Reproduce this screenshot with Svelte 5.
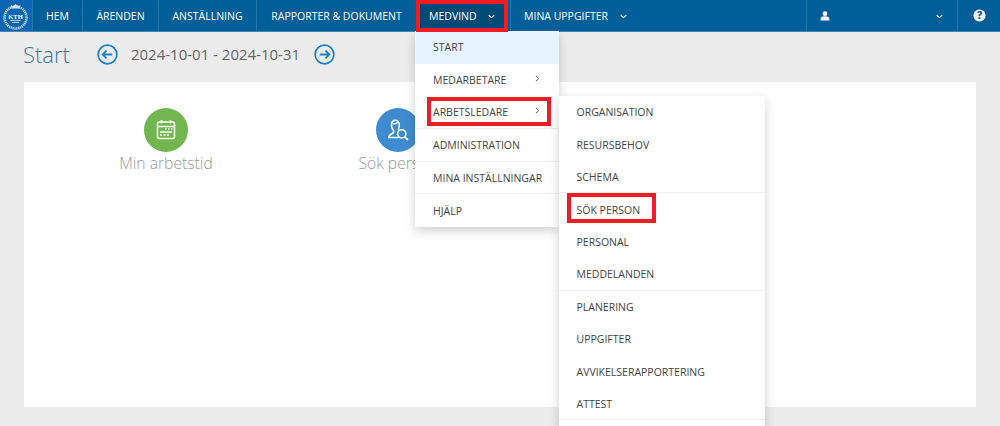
<script>
  const nav = [
    { label: 'HEM', w: 50 },
    { label: 'ÄRENDEN', w: 76 },
    { label: 'ANSTÄLLNING', w: 98 },
    { label: 'RAPPORTER & DOKUMENT', w: 160 }
  ];

  const menu = [
    { label: 'START', active: true },
    { label: 'MEDARBETARE', arrow: true },
    { label: 'ARBETSLEDARE', arrow: true, marked: true, line: true },
    { label: 'ADMINISTRATION', line: true },
    { label: 'MINA INSTÄLLNINGAR', line: true },
    { label: 'HJÄLP' }
  ];

  const submenu = [
    { label: 'ORGANISATION' },
    { label: 'RESURSBEHOV' },
    { label: 'SCHEMA', line: true },
    { label: 'SÖK PERSON', marked: true },
    { label: 'PERSONAL' },
    { label: 'MEDDELANDEN', line: true },
    { label: 'PLANERING' },
    { label: 'UPPGIFTER' },
    { label: 'AVVIKELSERAPPORTERING' },
    { label: 'ATTEST', line: true },
    { label: '' }
  ];
</script>

{#snippet chevron()}
  <svg class="chevron" viewBox="0 0 10 6" width="7" height="5"><path d="M1 1l4 3.600L9 1" fill="none" stroke="currentColor" stroke-width="1.500" /></svg>
{/snippet}

<div class="page">
  <header class="navbar">
    <div class="logo">
      <svg viewBox="0 0 32 32" width="32" height="32">
        <circle cx="15.500" cy="17.500" r="11" fill="none" stroke="#c3d5e8" stroke-width="2.600" stroke-dasharray="1.200 0.700" />
        <path d="M11.500 8.500l-.8-3.500 2.300 1.300 2.500-2.300 2.500 2.300 2.300-1.300-.8 3.500z" fill="#d5e2f0" />
        <text x="15.500" y="18.500" text-anchor="middle" class="kth">KTH</text>
        <rect x="10.500" y="20" width="10" height="1" fill="#b9cfe6" />
        <rect x="12" y="22" width="7" height="1" fill="#b9cfe6" />
      </svg>
    </div>
    {#each nav as item}
      <div class="nav-item" style="width: {item.w}px">{item.label}</div>
    {/each}
    <div class="nav-item current">
      <span>MEDVIND</span>
      {@render chevron()}
    </div>
    <div class="nav-item tasks">
      <span>MINA UPPGIFTER</span>
      {@render chevron()}
    </div>
    <div class="nav-item user">
      <svg viewBox="0 0 12 12" width="10" height="10"><circle cx="6" cy="3.200" r="2.800" fill="#fff" /><path d="M0.800 11.500V9c0-1.800 1.800-2.800 5.200-2.800s5.200 1 5.200 2.800v2.500z" fill="#fff" /></svg>
      {@render chevron()}
    </div>
    <div class="nav-item help">
      <svg viewBox="0 0 14 14" width="13" height="13">
        <circle cx="7" cy="7" r="6.500" fill="#fff" />
        <text x="7" y="10.600" text-anchor="middle" class="qmark">?</text>
      </svg>
    </div>
  </header>

  <div class="title-row">
    <h1>Start</h1>
    <svg viewBox="0 0 22 22" width="21" height="21"><circle cx="11" cy="11" r="9.800" fill="none" stroke="#1a82c9" stroke-width="1.800" /><path d="M16 11H6.500M10 7l-4 4 4 4" fill="none" stroke="#1a82c9" stroke-width="1.900" /></svg>
    <span class="dates">2024-10-01 - 2024-10-31</span>
    <svg viewBox="0 0 22 22" width="21" height="21"><circle cx="11" cy="11" r="9.800" fill="none" stroke="#1a82c9" stroke-width="1.800" /><path d="M6 11h9.500M12 7l4 4-4 4" fill="none" stroke="#1a82c9" stroke-width="1.900" /></svg>
  </div>

  <main class="card">
    <div class="tile">
      <div class="circle green">
        <svg viewBox="0 0 24 24" width="24" height="24" fill="none" stroke="#fff">
          <rect x="3.500" y="4" width="17" height="16.500" rx="1.500" stroke-width="1.500" />
          <path d="M7.500 2v3.500M16.500 2v3.500M3.500 8.500h17" stroke-width="1.500" />
          <path d="M11 11h1.500M14 11h1.500M17 11h1.500M6 14h12M6 17h2M9.500 17h2M13 17h2" stroke-width="1.300" />
        </svg>
      </div>
      <span>Min arbetstid</span>
    </div>
    <div class="tile">
      <div class="circle blue">
        <svg viewBox="0 0 24 24" width="26" height="26" fill="none" stroke="#fff" stroke-width="1.400">
          <path d="M12 11.500c1-1 1.200-2.500 1.200-4C13.200 4.500 11.500 3 9.500 3S6 4.700 6 7.500c0 2 .8 4 2 5 .3 1.500-.5 2.500-2 3.200-1.500.7-2.500 1.800-2.500 3.300h9" />
          <path d="M7 6c2 .5 4 0 5-1.500" />
          <circle cx="15.500" cy="15.500" r="3.800" />
          <path d="M18.300 18.300l3 3" stroke-width="1.800" />
        </svg>
      </div>
      <span>Sök person</span>
    </div>
  </main>

  <nav class="dropdown">
    {#each menu as item}
      <div class="row" class:active={item.active} class:line={item.line}>
        <span>{item.label}</span>
        {#if item.arrow}
          <svg class="arrow" viewBox="0 0 6 8" width="5" height="7"><path d="M1 .8L4.600 4 1 7.200" fill="none" stroke="#444" stroke-width="1" /></svg>
        {/if}
        {#if item.marked}<i class="mark wide"></i>{/if}
      </div>
    {/each}
  </nav>

  <nav class="dropdown sub">
    {#each submenu as item}
      <div class="row" class:line={item.line}>
        <span>{item.label}</span>
        {#if item.marked}<i class="mark person"></i>{/if}
      </div>
    {/each}
  </nav>
</div>

<style>
  :global(body) {
    margin: 0;
    background: #ececec;
  }

  .page {
    position: relative;
    width: 1000px;
    height: 426px;
    overflow: hidden;
    background: #ececec;
    font-family: "Open Sans", sans-serif;
  }

  .navbar {
    display: flex;
    height: 31px;
    background: #005f98;
    border-bottom: 1px solid #3d86b5;
    color: #fff;
    font-size: 10.500px;
    font-weight: 500;
  }

  .logo {
    width: 32px;
    flex: none;
    background: #0a66b4;
  }

  .kth {
    font-family: "Liberation Serif", serif;
    font-size: 6.500px;
    font-weight: 700;
    fill: #fff;
  }

  .qmark {
    font-family: "Open Sans", sans-serif;
    font-size: 11px;
    font-weight: 800;
    fill: #005f98;
  }

  .nav-item {
    display: flex;
    align-items: center;
    justify-content: center;
    box-sizing: border-box;
    flex: none;
    border-left: 1px solid #2277aa;
    white-space: nowrap;
  }

  .nav-item.current {
    width: 92px;
    height: 32px;
    margin-bottom: -1px;
    justify-content: flex-start;
    gap: 11px;
    padding-left: 9px;
    background: #004a78;
    border: 4px solid #ee1c25;
    z-index: 3;
  }

  .nav-item.tasks {
    width: 296px;
    margin-left: 2px;
    justify-content: flex-start;
    gap: 12px;
    padding-left: 13px;
  }

  .nav-item.user {
    width: 151px;
    justify-content: space-between;
    padding: 0 14px 0 13px;
  }

  .nav-item.help {
    width: 43px;
  }

  .chevron {
    flex: none;
    margin-top: 1px;
  }

  .title-row {
    display: flex;
    align-items: center;
    height: 44px;
    margin-bottom: 6px;
    padding-left: 23px;
  }

  h1 {
    margin: 0 27px 0 0;
    font-size: 22px;
    font-weight: 300;
    color: #3a78a8;
  }

  .dates {
    margin: 0 14px 0 13px;
    font-size: 15px;
    color: #666;
  }

  .card {
    display: flex;
    box-sizing: border-box;
    width: 952px;
    height: 325px;
    margin-left: 24px;
    padding: 26px 26px;
    background: #fff;
  }

  .tile {
    display: flex;
    flex-direction: column;
    align-items: center;
    width: 232px;
    font-size: 15.700px;
    font-weight: 300;
    color: #999;
    line-height: 22px;
  }

  .circle {
    display: flex;
    align-items: center;
    justify-content: center;
    width: 44px;
    height: 44px;
    border-radius: 50%;
  }

  .green {
    background: #72b650;
  }

  .blue {
    background: #3f8bd0;
  }

  .dropdown {
    position: absolute;
    left: 415px;
    top: 31px;
    width: 144px;
    background: #fff;
    box-shadow: 0 4px 10px rgba(0, 0, 0, 0.18);
    font-size: 10.500px;
    color: #444;
    z-index: 2;
  }

  .dropdown.sub {
    left: 559px;
    top: 96px;
    width: 206px;
  }

  .row {
    position: relative;
    display: flex;
    align-items: center;
    justify-content: space-between;
    box-sizing: border-box;
    height: 32.700px;
    padding: 0 18px;
    white-space: nowrap;
  }

  .sub .row {
    height: 32.450px;
    padding-left: 17.500px;
  }

  .row.active {
    background: #e6f4fd;
  }

  .row.line {
    border-bottom: 1px solid #eee;
  }

  .arrow {
    margin-top: -4px;
    margin-right: 1px;
  }

  .mark {
    position: absolute;
    border: 4px solid #ee1c25;
    pointer-events: none;
  }

  .mark.wide {
    left: 12px;
    top: 1px;
    width: 116px;
    height: 21px;
  }

  .mark.person {
    left: 8px;
    top: 0;
    width: 81px;
    height: 22px;
  }
</style>
